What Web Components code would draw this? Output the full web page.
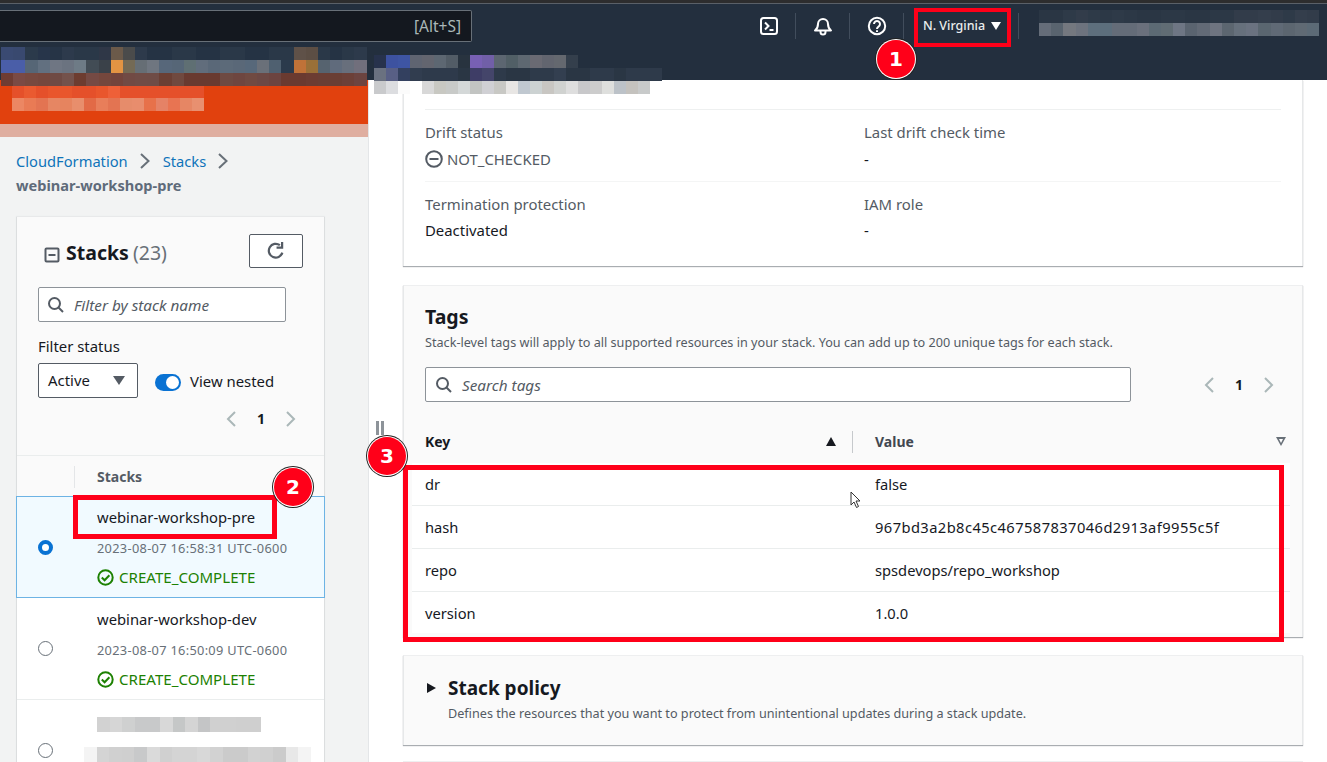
<!DOCTYPE html>
<html lang="en">
<head>
<meta charset="utf-8">
<title>CloudFormation stack</title>
<style>
  html, body { margin: 0; height: 762px; overflow: hidden; background: #fff; }
  body { font: 14.9px/22px "Noto Sans", "Liberation Sans", sans-serif; color: #16191f; position: relative; }
  .page { display: flex; flex-direction: column; height: 762px; }
  .columns { display: flex; flex: 1; min-height: 0; }
</style>
</head>
<body>
<div class="page">
  <top-bar></top-bar>
  <div class="columns">
    <stack-sidebar>
      <stack-row name="webinar-workshop-pre" date="2023-08-07 16:58:31 UTC-0600" selected></stack-row>
      <stack-row name="webinar-workshop-dev" date="2023-08-07 16:50:09 UTC-0600"></stack-row>
      <stack-row hidden-text></stack-row>
    </stack-sidebar>
    <stack-detail></stack-detail>
  </div>
</div>
<page-notes></page-notes>

<script>
const ICONS = {
  terminal: '<svg width="20" height="20" viewBox="0 0 20 20" fill="none" stroke="#fff" stroke-width="2"><rect x="2" y="2" width="16" height="16" rx="2.5"/><path d="M6 6.5l3.5 3.5L6 13.5M10.5 14h4"/></svg>',
  bell: '<svg width="20" height="20" viewBox="0 0 20 20" fill="none" stroke="#fff" stroke-width="2" stroke-linejoin="round"><path d="M2 14.5c2-1.5 3-3 3-6.5a5 5 0 0 1 10 0c0 3.500 1 5 3 6.500z"/><path d="M7.500 15v1a2.500 2.500 0 0 0 5 0v-1"/></svg>',
  help: '<svg width="20" height="20" viewBox="0 0 20 20" fill="none" stroke="#fff" stroke-width="2"><circle cx="10" cy="10" r="8.200"/><path d="M7 8a3 3 0 1 1 4.500 2.600c-1 .6-1.500 1.200-1.500 2.400"/><path d="M10 14.200v1.800"/></svg>',
  search: '<svg width="18" height="18" viewBox="0 0 18 18" fill="none" stroke="#545b64" stroke-width="2"><circle cx="7.500" cy="7.500" r="5.500"/><path d="M11.500 11.500L16 16"/></svg>',
  refresh: '<svg width="20" height="20" viewBox="0 0 18 18" fill="none" stroke="#545b64" stroke-width="2"><path d="M14.700 10.500A6.200 6.200 0 1 1 12.500 3.800"/><path d="M14.500 1v5h-5" stroke-linejoin="miter"/></svg>',
  ok: '<svg width="17" height="17" viewBox="0 0 17 17" fill="none" stroke="#1d8102" stroke-width="2"><circle cx="8.500" cy="8.500" r="7.200"/><path d="M4.800 8.500l2.800 2.800 4.800-5"/></svg>',
  notChecked: '<svg width="18" height="18" viewBox="0 0 18 18" fill="none" stroke="#545b64" stroke-width="2"><circle cx="9" cy="9" r="7.800"/><path d="M4.500 9h9"/></svg>',
  left: '<svg width="12" height="18" viewBox="0 0 12 18" fill="none" stroke="#aab7b8" stroke-width="2"><path d="M10 2L3 9l7 7"/></svg>',
  right: '<svg width="12" height="18" viewBox="0 0 12 18" fill="none" stroke="#aab7b8" stroke-width="2"><path d="M2 2l7 7-7 7"/></svg>',
  crumb: '<svg width="12" height="18" viewBox="0 0 12 18" fill="none" stroke="#687078" stroke-width="2"><path d="M2 2l7.500 7-7.500 7"/></svg>',
};

class BlurStrip extends HTMLElement {
  constructor() {
    super();
    const cell = this.getAttribute('cell') || 12.2;
    const height = this.getAttribute('h') || 13;
    const colors = this.getAttribute('colors').trim().split(/\s+/);
    const root = this.attachShadow({ mode: 'open' });
    root.innerHTML = `<style>
      :host { display: flex; height: ${height}px; }
      i { display: block; width: ${cell}px; height: 100%; flex: none; }
    </style>` + colors.map((c) => `<i style="background:${c}"></i>`).join('');
  }
}
customElements.define('blur-strip', BlurStrip);

class TopBar extends HTMLElement {
  constructor() {
    super();
    const root = this.attachShadow({ mode: 'open' });
    root.innerHTML = `<style>
      :host { display: block; height: 80px; flex: none; box-sizing: border-box; background: #232f3e;
        border-top: 3px solid #2d2d2e; box-shadow: inset 0 1px 0 #5a6068; color: #fff; }
      .row { display: flex; align-items: flex-start; padding-top: 7px; }
      .search { width: 472px; height: 32px; box-sizing: border-box; margin-right: 270px; background: #14181f;
        border: 1px solid #687078; border-left: none; border-radius: 0 2px 2px 0; color: #aab7b8;
        display: flex; align-items: center; justify-content: flex-end; padding-right: 10px; font-size: 15.500px; }
      .icon { width: 54px; height: 32px; box-sizing: border-box; display: flex; align-items: center; justify-content: center;
        position: relative; }
      .icon::after, .region::after { content: ""; position: absolute; right: 0; top: 3px; bottom: 3px; width: 1px; background: #414d5c; }
      .region { width: 115px; height: 32px; box-sizing: border-box; padding-left: 19px; display: flex; align-items: center;
        gap: 6px; font-size: 12.500px; font-weight: 500; position: relative; color: #eaeded; }
      .caret { width: 0; height: 0; border: 5px solid transparent; border-top: 8px solid #fff; border-bottom: none; }
      .name { margin-left: 20px; }
    </style>
    <div class="row">
      <div class="search">[Alt+S]</div>
      <div class="icon">${ICONS.terminal}</div>
      <div class="icon">${ICONS.bell}</div>
      <div class="icon">${ICONS.help}</div>
      <div class="region">N. Virginia <span class="caret"></span></div>
      <div class="name">
        <blur-strip colors="#2a3644 #2a3644 #2e3a48 #323c4a #2e3a48 #2c3846 #2e3a48 #2c3846 #2a3644 #2a3644 #2c3846 #2c3846 #2a3644 #2a3644 #2c3846 #2c3846 #323c4a #323c4a #343e4c #323c4a #2e3a48 #343e4c #323c4a"></blur-strip>
        <blur-strip colors="#656d79 #59646f #74787f #6d737e #5e6f7d #5c6e7c #646c78 #646c78 #6a707c #5c6a74 #606c74 #6e7684 #5a6470 #626a76 #6e7480 #5c6670 #66707c #6a7280 #5a6670 #606a76 #5c6670 #606a74 #5c6a76"></blur-strip>
      </div>
    </div>`;
  }
}
customElements.define('top-bar', TopBar);

class PagerControl extends HTMLElement {
  constructor() {
    super();
    const root = this.attachShadow({ mode: 'open' });
    root.innerHTML = `<style>
      :host { display: flex; align-items: center; gap: 20px; font-weight: 700; font-size: 14px; color: #16191f; }
      svg { display: block; }
    </style>${ICONS.left}<span>1</span>${ICONS.right}`;
  }
}
customElements.define('pager-control', PagerControl);

class SearchBox extends HTMLElement {
  constructor() {
    super();
    const root = this.attachShadow({ mode: 'open' });
    root.innerHTML = `<style>
      :host { display: flex; align-items: center; gap: 9px; height: 35px; box-sizing: border-box; padding-left: 8px;
        background: #fff; border: 1px solid #8d9399; border-radius: 2px; color: #545b64; font-style: italic; font-size: 15.300px; }
      svg { display: block; }
    </style>${ICONS.search}<slot></slot>`;
  }
}
customElements.define('search-box', SearchBox);

class StackSidebar extends HTMLElement {
  constructor() {
    super();
    const root = this.attachShadow({ mode: 'open' });
    root.innerHTML = `<style>
      :host { display: block; width: 369px; flex: none; box-sizing: border-box; background: #f2f3f3;
        border-right: 1px solid #e4e6e8; overflow: hidden; }
      .banner { background: #e1410e; height: 44px; box-sizing: border-box; padding: 6px 0 0 12px; }
      .pink { background: #dfaea0; height: 13px; }
      .crumbs { padding: 12px 0 0 16px; line-height: 24px; }
      .links { display: flex; align-items: center; color: #0f73ba; font-size: 14.700px; }
      .links svg { margin: 0 13px 0 11px; }
      .links svg + span { margin-left: -1px; }
      .current { font-weight: 700; color: #5f6b7a; font-size: 14.600px; }
      .card { margin: 20px 0 0 16px; width: 309px; background: #fafafa; border: solid #dcdedf; border-width: 0 1px 0 1px;
        box-sizing: border-box; box-shadow: 0 -1px 1px #e8e9ea; height: 600px; }
      .top { padding: 17px 21px 0 21px; }
      .head { display: flex; align-items: center; height: 34px; }
      .head h2 { margin: 0 0 0 6px; font-size: 19.500px; font-weight: 700; line-height: 28px; flex: 1; position: relative; top: 2px; }
      .head h2 span { color: #687078; font-weight: 400; margin-left: -1px; }
      .head svg.collapse { margin-left: 6px; position: relative; top: 4px; }
      .refresh { width: 54px; height: 34px; box-sizing: border-box; background: #fff; border: 1px solid #545b64; border-radius: 2px;
        display: flex; align-items: center; justify-content: center; }
      search-box { margin-top: 19px; width: 248px; }
      .label { margin-top: 13px; line-height: 22px; }
      .filters { display: flex; align-items: center; margin-top: 6px; }
      .select { width: 100px; height: 35px; box-sizing: border-box; background: #fff; border: 1px solid #545b64; border-radius: 2px;
        display: flex; align-items: center; justify-content: space-between; padding: 0 12px 2px 9px; }
      .caret { width: 0; height: 0; border: 6px solid transparent; border-top: 9px solid #545b64; border-bottom: none; margin-top: 2px; }
      .toggle { width: 26px; height: 17px; border-radius: 9px; background: #0972d3; margin: 3px 9px 0 17px; position: relative; }
      .toggle::after { content: ""; position: absolute; right: 2px; top: 2px; width: 13px; height: 13px; border-radius: 50%; background: #fff; }
      pager-control { justify-content: flex-end; margin: 9px 6px 0 0; height: 24px; }
      .thead { margin-top: 24px; height: 41px; box-sizing: border-box; border-top: 1px solid #eaeded; padding: 10px 0 0 0; display: flex; }
      .thead div { margin-left: 57px; border-left: 1px solid #e4e6e8; padding-left: 22px; height: 22px; line-height: 22px;
        font-weight: 700; color: #545b64; font-size: 14px; }
    </style>
    <div class="banner">
      <blur-strip cell="12" h="12" colors="#e5502a #ea5a30 #e5502a #e9562c #e9562c #e5502a #e5502a #e9562c #ee6038 #e5502a #e5502a #e5502a #e5502a #e5502a #e5502a #e5502a"></blur-strip>
      <blur-strip cell="12" colors="#ec8763 #e97b55 #e37452 #e68663 #e6845f #e88e6c #e26a46 #e87e5a #e37452 #e68c6b #e88d6d #e7714a #e58266 #e87452 #e68664 #e89070"></blur-strip>
    </div>
    <div class="pink"></div>
    <div class="crumbs">
      <div class="links"><span>CloudFormation</span>${ICONS.crumb}<span>Stacks</span>${ICONS.crumb}</div>
      <div class="current">webinar-workshop-pre</div>
    </div>
    <div class="card">
      <div class="top">
        <div class="head">
          <svg class="collapse" width="16" height="16" viewBox="0 0 16 16" fill="none" stroke="#545b64" stroke-width="2"><rect x="1.500" y="1.500" width="13" height="13" rx="1"/><path d="M4.500 8h7"/></svg>
          <h2>Stacks <span>(23)</span></h2>
          <div class="refresh">${ICONS.refresh}</div>
        </div>
        <search-box>Filter by stack name</search-box>
        <div class="label">Filter status</div>
        <div class="filters">
          <div class="select">Active <span class="caret"></span></div>
          <div class="toggle"></div>
          <div>View nested</div>
        </div>
        <pager-control></pager-control>
      </div>
      <div class="thead"><div>Stacks</div></div>
      <slot></slot>
    </div>`;
  }
}
customElements.define('stack-sidebar', StackSidebar);

class StackRow extends HTMLElement {
  constructor() {
    super();
    const name = this.getAttribute('name');
    const date = this.getAttribute('date');
    const body = this.hasAttribute('hidden-text')
      ? `<div class="masked">
           <blur-strip cell="12.600" h="15" colors="#d2d2d2 #d6d6d6 #cfd0d0 #c8c9ca #c8c9ca #d8d8d8 #c5c7c7 #d4d4d4 #c4c5c6 #d0d0d0 #d0d0d0 #cfcfcf #cfcfcf"></blur-strip>
           <blur-strip class="second" cell="12.600" h="15" colors="#f4f4f4 #d4d4d4 #d0d0d0 #cfcfcf #c8c9ca #dadada #d0d0d0 #d4d4d4 #d4d4d4 #d8d8d8 #d2d2d2 #cbcbcb #cbcbcb #d2d2d2 #d0d0d0 #cbcbcb #e8e8e8 #f4f4f4"></blur-strip>
         </div>`
      : `<div class="name">${name}</div><div class="date">${date}</div>
         <div class="status">${ICONS.ok}<span>CREATE_COMPLETE</span></div>`;
    const root = this.attachShadow({ mode: 'open' });
    root.innerHTML = `<style>
      :host { display: flex; align-items: center; height: 102px; box-sizing: border-box; background: #fff; border-bottom: 1px solid #eaeded; }
      :host([selected]) { background: #f1faff; border: 1px solid #6db3e4; margin-left: -1px; margin-right: -1px; }
      .radio { width: 15px; height: 15px; box-sizing: border-box; border: 1.500px solid #687078; border-radius: 50%; background: #fff;
        margin: 0 44px 0 21px; flex: none; }
      :host([selected]) .radio { border: 4.500px solid #0972d3; margin-left: 21px; }
      .text { display: flex; flex-direction: column; height: 100%; box-sizing: border-box; padding-top: 9px; }
      :host([selected]) .text { padding-top: 8px; }
      .name { line-height: 24px; font-size: 14.800px; }
      .date { line-height: 22px; margin-top: 8px; font-size: 12.800px; letter-spacing: .3px; color: #687078; }
      :host([selected]) .date { margin-top: 8px; }
      .status { line-height: 22px; margin-top: 7px; display: flex; align-items: center; gap: 5px; font-size: 15.100px; color: #1d8102; }
      svg { display: block; }
      .masked { margin-top: 8px; }
      .second { margin: 15px 0 0 -13px; }
    </style>
    <div class="radio"></div>
    <div class="text">${body}</div>`;
  }
}
customElements.define('stack-row', StackRow);

class InfoField extends HTMLElement {
  constructor() {
    super();
    const root = this.attachShadow({ mode: 'open' });
    root.innerHTML = `<style>
      :host { display: block; }
      .label { color: #545b64; line-height: 22px; }
      .value { line-height: 22px; margin-top: var(--gap, 5px); display: flex; align-items: center; gap: 4px; }
      svg { display: block; }
    </style>
    <div class="label">${this.getAttribute('label')}</div>
    <div class="value"><slot></slot></div>`;
  }
}
customElements.define('info-field', InfoField);

class TagTable extends HTMLElement {
  constructor() {
    super();
    const rows = [
      ['dr', 'false'],
      ['hash', '<span class="digits">967bd3a2b8c45c467587837046d2913af9955c5f</span>'],
      ['repo', 'spsdevops/repo_workshop'],
      ['version', '1.0.0'],
    ];
    const root = this.attachShadow({ mode: 'open' });
    root.innerHTML = `<style>
      :host { display: block; margin: 17px -9px 0 -13px; }
      .head { display: flex; align-items: center; height: 44px; padding: 1px 0 0 13px; box-sizing: border-box; font-weight: 700; color: #414750; font-size: 14px; }
      .key { width: 427px; box-sizing: border-box; padding-right: 16px; display: flex; justify-content: space-between; align-items: center; color: #16191f; }
      .sep { width: 1px; height: 22px; background: #c6c9cc; margin-right: 22px; }
      .val { flex: 1; display: flex; justify-content: space-between; align-items: center; padding-right: 4px; }
      .up { width: 0; height: 0; border: 5.500px solid transparent; border-bottom: 9px solid #16191f; border-top: none; }
      .down { width: 0; height: 0; border: 5.500px solid transparent; border-top: 9px solid #687078; border-bottom: none; position: relative; }
      .down::after { content: ""; position: absolute; left: -2.500px; top: -7.500px; border: 2.500px solid transparent; border-top: 4.500px solid #fff; border-bottom: none; }
      .row { display: flex; align-items: center; height: 43px; padding-left: 13px; box-sizing: border-box; border-bottom: 1px solid #eaeded; background: #fff; font-size: 14.700px; }
      .row:last-child { border-bottom: none; height: 41px; }
      .row div:first-child { width: 450px; flex: none; }
      .digits { letter-spacing: .42px; }
    </style>
    <div class="head">
      <div class="key">Key <span class="up"></span></div>
      <div class="sep"></div>
      <div class="val">Value <span class="down"></span></div>
    </div>
    ${rows.map(([k, v]) => `<div class="row"><div>${k}</div><div>${v}</div></div>`).join('')}`;
  }
}
customElements.define('tag-table', TagTable);

class StackDetail extends HTMLElement {
  constructor() {
    super();
    const root = this.attachShadow({ mode: 'open' });
    root.innerHTML = `<style>
      :host { display: flex; flex-direction: column; flex: 1; padding: 0 24px 0 34px; box-sizing: border-box; background: #fff; overflow: hidden; }
      .card { flex: none; box-sizing: border-box; border-left: 1px solid #e6e8e9; border-right: 1px solid #e6e8e9; box-shadow: 0 1px 1px #a9adb1; }
      .overview { height: 186px; padding: 29px 21px 0 21px; background: #fff; }
      .fields { display: grid; grid-template-columns: 439px 1fr; border-top: 1px solid #eef0f0; }
      .fields > div { padding: 11px 0; }
      .fields > div.low { border-top: 1px solid #f4f5f5; padding-top: 11px; --gap: 4px; }
      .muted { color: #545b64; }
      .tags { height: 352px; margin-top: 19px; padding: 17px 21px 0 21px; background: #fafafa; border-top: 1px solid #eeeff0; }
      h2 { margin: 0; font-size: 19.500px; line-height: 28px; font-weight: 700; }
      p { margin: 2px 0 0; font-size: 12.650px; line-height: 18px; color: #545b64; }
      .tools { display: flex; align-items: center; margin-top: 16px; }
      search-box { width: 706px; margin-right: 72px; padding-left: 9px; }
      .policy { height: 90px; margin-top: 18px; padding: 18px 21px 0 23px; background: #fafafa; display: flex; border-top: 1px solid #eeeff0; }
      .policy h2 { font-size: 19px; }
      .tri { width: 0; height: 0; border: 5.500px solid transparent; border-left: 9px solid #16191f; border-right: none; margin: 9px 12px 0 0; }
      .next { margin-top: 16px; height: 20px; border: 1px solid #eeeff0; background: #fafafa; }
      svg { display: block; }
    </style>
    <section class="card overview">
      <div class="fields">
        <div><info-field label="Drift status"><span style="display:contents">${ICONS.notChecked}<span class="muted">NOT_CHECKED</span></span></info-field></div>
        <div><info-field label="Last drift check time">-</info-field></div>
        <div class="low"><info-field label="Termination protection">Deactivated</info-field></div>
        <div class="low"><info-field label="IAM role">-</info-field></div>
      </div>
    </section>
    <section class="card tags">
      <h2>Tags</h2>
      <p>Stack-level tags will apply to all supported resources in your stack. You can add up to 200 unique tags for each stack.</p>
      <div class="tools">
        <search-box>Search tags</search-box>
        <pager-control></pager-control>
      </div>
      <tag-table></tag-table>
    </section>
    <section class="card policy">
      <span class="tri"></span>
      <div>
        <h2>Stack policy</h2>
        <p>Defines the resources that you want to protect from unintentional updates during a stack update.</p>
      </div>
    </section>
    <div class="next"></div>`;
  }
}
customElements.define('stack-detail', StackDetail);

// everything below sits on top of the page: blurred redactions, red call-outs, the cursor
class PageNotes extends HTMLElement {
  constructor() {
    super();
    const root = this.attachShadow({ mode: 'open' });
    root.innerHTML = `<style>
      :host { position: absolute; inset: 0; pointer-events: none; }
      .at { position: absolute; }
      .box { position: absolute; box-sizing: border-box; border: 5px solid #ff0019; }
      .badge { position: absolute; width: 38px; height: 38px; border-radius: 50%; background: #ff0019; color: #fff;
        display: flex; align-items: center; justify-content: center; font: 700 20px "DejaVu Sans", sans-serif;
        box-shadow: 0 0 0 1px #fff, 0 0 0 2px #222; }
      .split { position: absolute; left: 376px; top: 421px; width: 3px; height: 14px; background: #8d9399; box-shadow: 5px 0 0 #8d9399; }
    </style>
    <div class="at" style="left:1px;top:47px">
      <blur-strip colors="#3a4a72 #39496f #2b3a4b #27354a #263446 #2d3a4c #2a3848 #2a3848 #2f3747 #6b5a4a #4a4b4b #2d3a4b #253344 #253344 #2a3848 #2a3848 #253344 #253344 #2a3848 #2a3848 #253344 #253344 #2a3848 #2a3848 #5f5148 #5c4e44 #2a3848 #253344 #2a3848 #2d3a4b"></blur-strip>
      <blur-strip colors="#4a5ea8 #4a5ea8 #566676 #627080 #6f7683 #6b7380 #6e7b86 #424c55 #3a4149 #e39443 #746a55 #666e75 #6f7680 #57677a #566677 #5f6f73 #616d7c #5a6878 #5c6a79 #5a6878 #57687a #6a7079 #4f6070 #2b3a4c #c07238 #9a7038 #56636f #606b7c #686f7c #716f7c"></blur-strip>
      <blur-strip colors="#6e3c33 #7a4a44 #77493f #75473d #6f4a44 #74524c #6d3c30 #754a44 #75473d #73443c #714a44 #704c46 #6f4c46 #6b3f34 #70493f #693a30 #693a30 #693a30 #6e4a42 #6e4640 #704a42 #6c4844 #6c4440 #6a3a30 #6a3a30 #6c3c32 #6a3e34 #6a3e34 #6c4038 #6c4440"></blur-strip>
    </div>
    <div class="at" style="left:374px;top:55px">
      <blur-strip cell="12" colors="#27324c #3d52a0 #3e55a3 #5f6471 #63656f #5d6772 #525c66 #28333f #7860b4 #715fa8 #5c6671 #515f66 #5e6871 #6a6a73 #62656f #64686f #343f4c"></blur-strip>
      <blur-strip cell="12" colors="#6a7180 #585f85 #33405f #313d4f #2e3a4b #2e3a4b #2e3a4b #2a3644 #3e3d66 #44456a #2e3a4a #2a3644 #2a3644 #2e3a4a #2e3a4a #333f50 #2a3644 #2a3644 #2e3a4a #2e3a4a #2a3644 #2e3a4a #2e3a4a #2e3a4a"></blur-strip>
      <blur-strip cell="12" colors="#c9cacc #dcdde0 #fbfbfb #ffffff #d8d8d8 #c8c8c2 #c8cac8 #d4d8d8 #c2c4c2 #d0d0d4 #c8c8c4 #e8e6e4 #c0c8d0 #ccd2d2 #c8c6c2 #d0d2d0 #dedede #c8c8ca #cccccc #dedfdd #bcc2c8 #c4c2be #c8caca"></blur-strip>
    </div>
    <div class="box" style="left:914px;top:8px;width:97px;height:39px;border-width:4px"></div>
    <div class="badge" style="left:877px;top:40px">1</div>
    <div class="box" style="left:73px;top:495px;width:204px;height:44px"></div>
    <div class="badge" style="left:274px;top:468px">2</div>
    <div class="box" style="left:403px;top:465px;width:881px;height:177px"></div>
    <div class="badge" style="left:368px;top:437px">3</div>
    <div class="split"></div>
    <svg class="at" style="left:850px;top:491px" width="12" height="18" viewBox="0 0 12 18"><path d="M1 1v13l3-3 2.500 5.500 2-1L6 10h4z" fill="#fff" stroke="#333" stroke-width="1"/></svg>`;
  }
}
customElements.define('page-notes', PageNotes);
</script>
</body>
</html>
